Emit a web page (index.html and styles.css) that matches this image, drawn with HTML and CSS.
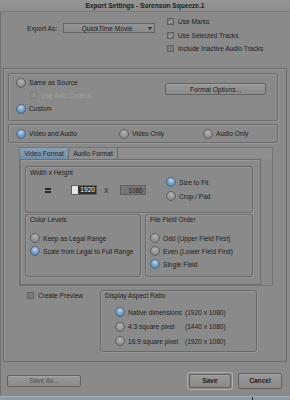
FILE: index.html
```html
<!DOCTYPE html>
<html lang="en">
<head>
  <meta charset="UTF-8" />
  <title>Export Settings - Sorenson Squeeze.1</title>
  <link rel="stylesheet" href="styles.css">
</head>
<body>
  <div class="titlebar">Export Settings - Sorenson Squeeze.1</div>

  <div class="top">
    <div class="export-row">
      <span class="export-label">Export As:</span>
      <div class="select"><span class="select-text">QuickTime Movie</span><span class="arrow"></span></div>
    </div>
    <div class="track-opts">
      <div class="check-row">
        <span class="box checked"><svg viewBox="0 0 7 7" width="5" height="5"><polyline points="0.8,3.6 2.8,5.6 6.2,1" /></svg></span>Use Marks
      </div>
      <div class="check-row">
        <span class="box checked"><svg viewBox="0 0 7 7" width="5" height="5"><polyline points="0.8,3.6 2.8,5.6 6.2,1" /></svg></span>Use Selected Tracks
      </div>
      <div class="check-row">
        <span class="box"></span>Include Inactive Audio Tracks
      </div>
    </div>
  </div>

  <div class="main">
    <div class="panel source">
      <div class="source-opts">
        <div class="row"><span class="radio"></span>Same as Source</div>
        <div class="row sub disabled"><span class="box"></span>Use Avid Codecs</div>
        <div class="row"><span class="radio on"></span>Custom</div>
      </div>
      <div class="btn format-btn">Format Options...</div>
    </div>

    <div class="panel streams">
      <div class="opt"><span class="radio on"></span>Video and Audio</div>
      <div class="opt"><span class="radio"></span>Video Only</div>
      <div class="opt"><span class="radio"></span>Audio Only</div>
    </div>

    <div class="tabs">
      <div class="tab-strip">
        <span class="tab active">Video Format</span>
        <span class="tab">Audio Format</span>
      </div>
      <div class="tab-body">
        <div class="group wh">
          <div class="wh-left">
            <div class="group-title">Width x Height</div>
            <div class="dims">
              <span class="link-icon"></span>
              <span class="field"><span class="sel">1920</span></span>
              <span class="times">X</span>
              <span class="field dark">1080</span>
            </div>
          </div>
          <div class="wh-radios">
            <div class="opt"><span class="radio on"></span>Size to Fit</div>
            <div class="opt"><span class="radio"></span>Crop / Pad</div>
          </div>
        </div>

        <div class="lower">
          <div class="group levels">
            <div class="group-title">Color Levels</div>
            <div class="opts">
              <div class="opt"><span class="radio"></span>Keep as Legal Range</div>
              <div class="opt"><span class="radio on"></span>Scale from Legal to Full Range</div>
            </div>
          </div>
          <div class="group fields">
            <div class="group-title">File Field Order</div>
            <div class="opts">
              <div class="opt"><span class="radio"></span>Odd (Upper Field First)</div>
              <div class="opt"><span class="radio"></span>Even (Lower Field First)</div>
              <div class="opt"><span class="radio on"></span>Single Field</div>
            </div>
          </div>
        </div>
      </div>
    </div>

    <div class="bottom">
      <div class="preview"><span class="box"></span>Create Preview</div>
      <div class="group aspect">
        <div class="group-title">Display Aspect Ratio</div>
        <div class="opts">
          <div class="opt"><span class="radio on"></span><span class="res-name">Native dimensions</span>(1920 x 1080)</div>
          <div class="opt"><span class="radio"></span><span class="res-name">4:3 square pixel</span>(1440 x 1080)</div>
          <div class="opt"><span class="radio"></span><span class="res-name">16:9 square pixel</span>(1920 x 1080)</div>
        </div>
      </div>
    </div>
  </div>

  <div class="footer">
    <div class="btn save-as">Save As...</div>
    <div class="save-wrap"><div class="btn save">Save</div></div>
    <div class="btn cancel">Cancel</div>
  </div>
  <div class="desk"><span class="desk-mark"></span></div>
</body>
</html>
```

FILE: styles.css
```css
* {
  box-sizing: border-box;
}

body {
  margin: 0;
  width: 290px;
  height: 400px;
  overflow: hidden;
  background: #8a8a8a;
  box-shadow: inset 1px 0 0 #707070;
  font-family: "Liberation Sans", Arial, sans-serif;
  font-size: 6.6px;
  color: #202020;
}

.titlebar {
  height: 12px;
  line-height: 11px;
  text-align: center;
  font-weight: bold;
  border-bottom: 1px solid #7b7b7b;
  background: linear-gradient(#959595, #8d8d8d);
}

/* top: export type + track options */
.top {
  height: 56px;
  display: flex;
  padding: 6px 0 0 27px;
}

.export-row {
  display: flex;
  align-items: center;
  height: 10px;
  margin-top: 5px;
}

.export-label {
  width: 36px;
}

.select {
  width: 92px;
  height: 10px;
  display: flex;
  align-items: center;
  border: 1px solid #666666;
  background: linear-gradient(#939393, #8a8a8a);
  padding-right: 2px;
}

.select-text {
  flex: 1;
  text-align: center;
  padding-left: 2px;
}

.arrow {
  width: 0;
  height: 0;
  border-top: 3px solid #2a2a2a;
  border-left: 2px solid transparent;
  border-right: 2px solid transparent;
}

.track-opts {
  margin-left: 12px;
}

.check-row {
  display: flex;
  align-items: center;
  height: 7px;
  margin-bottom: 6.5px;
}

.box {
  width: 7px;
  height: 7px;
  flex: none;
  margin-right: 4px;
  border: 1px solid #626262;
  background: #7b7b7b;
  display: flex;
  align-items: center;
  justify-content: center;
}

.box svg polyline {
  fill: none;
  stroke: #bccada;
  stroke-width: 1.2;
}

/* main framed area */
.main {
  margin-left: 3px;
  width: 284px;
  height: 294px;
  border: 1px solid #6a6a6a;
  box-shadow: inset 1px 1px 0 #979797;
  padding: 4px 8px 0 4px;
}

.panel {
  border: 1px solid #6c6c6c;
  border-radius: 2px;
  box-shadow: inset 1px 1px 0 #979797, 1px 1px 0 #979797;
}

.source {
  height: 48px;
  display: flex;
  padding: 2px 0 0 7px;
}

.source-opts {
  flex: 1;
}

.row {
  display: flex;
  align-items: center;
  height: 13px;
}

.sub {
  padding-left: 14px;
}

.disabled {
  color: #a2a2a2;
}

.disabled .box {
  background: #8c8c8c;
  border-color: #7c7c7c;
}

.radio {
  width: 10px;
  height: 10px;
  flex: none;
  margin-right: 3px;
  border-radius: 50%;
  border: 1px solid #606060;
  background: radial-gradient(circle at 50% 30%, #b4b4b4, #8c8c8c 70%, #7c7c7c);
}

.radio.on {
  border-color: #4a6687;
  background: radial-gradient(circle at 50% 30%, #c0d4e8, #7598bf 55%, #55789f);
}

.btn {
  display: flex;
  align-items: center;
  justify-content: center;
  border: 1px solid #626262;
  border-radius: 2px;
  background: linear-gradient(#989898, #8b8b8b);
  box-shadow: inset 0 1px 0 #a4a4a4;
}

.format-btn {
  width: 101px;
  height: 12px;
  margin: 7px 11px 0 0;
}

.streams {
  margin-top: 3px;
  height: 19px;
  display: flex;
  align-items: center;
  padding-left: 7px;
}

.opt {
  display: flex;
  align-items: center;
  height: 10px;
}

.streams .opt:nth-child(1) {
  width: 103px;
}

.streams .opt:nth-child(2) {
  width: 84px;
}

/* tabs */
.tabs {
  margin: 4px 0 0 11px;
  width: 254px;
  height: 139px;
  border: 1px solid #757575;
}

.tab-strip {
  display: flex;
  height: 11px;
  background: #8e8e8e;
}

.tab {
  width: 49px;
  display: flex;
  align-items: center;
  justify-content: center;
  border-right: 1px solid #6c6c6c;
}

.tab.active {
  background: linear-gradient(#889fb6, #758da6);
  color: #1c2937;
}

.tab-body {
  width: 241px;
  height: 126px;
  border: 1px solid #6f6f6f;
  box-shadow: inset 1px 1px 0 #989898;
  padding: 6px 7px 7px 4px;
}

.group {
  border: 1px solid #6a6a6a;
  border-radius: 3px;
  box-shadow: inset 1px 1px 0 #979797, 1px 1px 0 #979797;
}

.group-title {
  line-height: 8px;
  height: 8px;
}

.wh {
  height: 47px;
  display: flex;
  padding: 2px 0 0 4px;
}

.dims {
  display: flex;
  align-items: center;
  height: 10px;
  margin-top: 8px;
}

.link-icon {
  width: 6px;
  height: 5px;
  margin-left: 15px;
  border-top: 2px solid #2c2c2c;
  border-bottom: 2px solid #2c2c2c;
}

.field {
  width: 26px;
  height: 10px;
  margin-left: 20px;
  display: flex;
  align-items: center;
  justify-content: flex-end;
  border: 1px solid #606060;
  background: #e4e4e4;
}

.field .sel {
  background: #303030;
  color: #f2f2f2;
  height: 8px;
  line-height: 8px;
  padding: 0 1px 0 2px;
}

.times {
  width: 4px;
  margin-left: 7px;
  text-align: center;
}

.field.dark {
  margin-left: 12px;
  background: #777777;
  padding-right: 2px;
}

.wh-radios {
  margin: 8px 0 0 20px;
  display: flex;
  flex-direction: column;
  gap: 4px;
}

.lower {
  display: flex;
  gap: 4px;
  height: 63px;
  margin-top: 1px;
}

.levels,
.fields,
.aspect {
  padding: 1px 0 0 4px;
}

.levels {
  width: 116px;
}

.fields {
  width: 108px;
}

.opts {
  margin-top: 9px;
  display: flex;
  flex-direction: column;
  gap: 3px;
}

/* bottom row */
.bottom {
  display: flex;
  margin-top: 4px;
}

.preview {
  display: flex;
  align-items: center;
  width: 73px;
  height: 7px;
  margin: 2px 0 0 19px;
}

.aspect {
  width: 157px;
  height: 62px;
}

.aspect .opts {
  margin-top: 7px;
  gap: 4.5px;
}

.aspect .opt {
  padding-left: 10px;
}

.res-name {
  width: 57px;
}

/* footer buttons */
.footer {
  height: 34px;
  display: flex;
  align-items: center;
  padding: 3px 8px 0 7px;
}

.save-as {
  width: 74px;
  height: 12px;
  color: #505050;
}

.save-wrap {
  margin-left: auto;
  width: 46px;
  height: 18px;
  padding: 1px;
  border: 1px solid #adadad;
  border-radius: 3px;
}

.save {
  height: 100%;
  font-weight: bold;
}

.cancel {
  width: 44px;
  height: 16px;
  margin-left: 5px;
  font-weight: bold;
}

.desk {
  height: 6px;
  background: #8e99a2;
  border-top: 1px solid #a5afb7;
  padding-left: 252px;
}

.desk-mark {
  display: block;
  width: 1px;
  height: 5px;
  background: #222222;
}
```
